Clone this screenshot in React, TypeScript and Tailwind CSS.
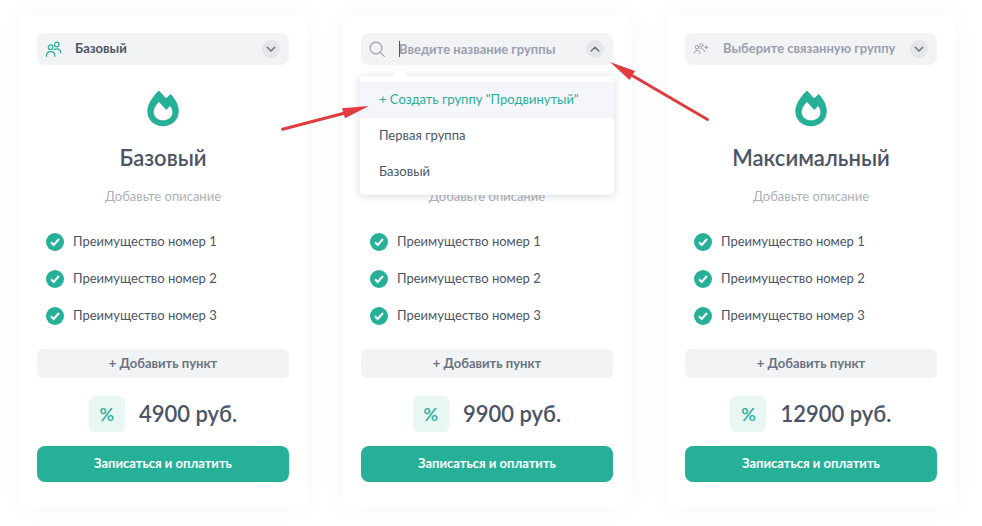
import type { ReactNode } from 'react';

const FEATURES = ['Преимущество номер 1', 'Преимущество номер 2', 'Преимущество номер 3'];

export default function App() {
  return (
    <main className="grid grid-cols-3 gap-9 bg-white pt-[15px] pr-[27px] pb-5 pl-[19px] font-['Lato','Noto_Sans',sans-serif] text-[13px] text-[#4b5566]">
      <Card title="Базовый" price="4900 руб.">
        <GroupSelect
          icon={<UsersIcon />}
          options={['Базовый', 'Первая группа']}
          className="text-[#4b5566]"
        />
      </Card>

      <Card price="9900 руб.">
        <GroupSearch />
        <GroupMenu />
        <Arrows />
      </Card>

      <Card title="Максимальный" price="12900 руб.">
        <GroupSelect
          icon={<UsersPlusIcon />}
          options={['Выберите связанную группу', 'Первая группа', 'Базовый']}
          className="text-[#9a9fb0]"
        />
      </Card>
    </main>
  );
}

function Card({ title, price, children }: { title?: string; price: string; children: ReactNode }) {
  return (
    <section className="relative flex flex-col rounded-lg bg-white px-[18px] pt-[18px] pb-[25px] shadow-[0_0_24px_rgba(0,0,0,0.04)]">
      {children}

      <FlameIcon />
      <h2 className="mt-[15px] min-h-8 text-center text-[22px] leading-8 font-semibold">{title}</h2>
      <p className="mt-3 text-center leading-5 text-[#adb0ba]">Добавьте описание</p>

      <ul className="mt-[27px] flex flex-col gap-[19px] pl-[9px]">
        {FEATURES.map((f) => (
          <li key={f} className="flex h-[18px] items-center gap-[9px]">
            <CheckIcon />
            <span>{f}</span>
          </li>
        ))}
      </ul>

      <button type="button" className="mt-6 h-[29px] rounded-md bg-[#f2f3f5] font-bold text-[#6a7282]">
        + Добавить пункт
      </button>

      <div className="mt-[18px] flex items-center justify-center gap-[14px]">
        <button
          type="button"
          aria-label="Скидка"
          className="size-9 rounded-md bg-[#e8f7f4] text-lg font-semibold text-[#27b098]"
        >
          %
        </button>
        <span className="text-[22px] leading-8 font-semibold">{price}</span>
      </div>

      <button type="button" className="mt-[14px] h-9 rounded-lg bg-[#27b098] font-bold text-white">
        Записаться и оплатить
      </button>
    </section>
  );
}

function GroupSelect({ icon, options, className }: { icon: ReactNode; options: string[]; className: string }) {
  return (
    <div className="relative">
      <select
        aria-label="Связанная группа"
        className={`block h-8 w-full appearance-none rounded-lg bg-[#f2f3f5] pr-9 pl-[38px] font-bold outline-none ${className}`}
      >
        {options.map((o) => (
          <option key={o}>{o}</option>
        ))}
      </select>
      <span className="pointer-events-none absolute inset-y-0 left-2 flex items-center">{icon}</span>
      <span className="pointer-events-none absolute inset-y-0 right-[9px] flex items-center">
        <Chevron />
      </span>
    </div>
  );
}

function GroupSearch() {
  return (
    <div className="relative">
      <input
        type="text"
        aria-label="Название группы"
        placeholder="Введите название группы"
        className="block h-8 w-full rounded-lg bg-[#f2f3f5] pr-9 pl-[38px] font-bold outline-none placeholder:text-[#9a9fb0]"
      />
      <span className="absolute inset-y-0 left-2 flex items-center">
        <SearchIcon />
      </span>
      <span className="absolute top-2 left-[38px] h-4 w-px bg-[#4b5566]" />
      <button type="button" aria-label="Свернуть" className="absolute inset-y-0 right-[9px] flex items-center">
        <Chevron up />
      </button>
    </div>
  );
}

function GroupMenu() {
  return (
    <div className="absolute inset-x-[17px] top-[61px] z-10 rounded-sm bg-white pt-[6px] pb-[5px] shadow-[0_1px_8px_rgba(40,50,80,0.18)]">
      <span className="absolute -top-[5px] left-[35px] size-[10px] rotate-45 bg-white" />
      <ul className="relative">
        <li>
          <button type="button" className="h-9 w-full bg-[#f5f6fb] px-[19px] text-left text-[#27b098]">
            + Создать группу "Продвинутый"
          </button>
        </li>
        <li>
          <button type="button" className="h-9 w-full px-[19px] text-left">
            Первая группа
          </button>
        </li>
        <li>
          <button type="button" className="h-9 w-full px-[19px] text-left">
            Базовый
          </button>
        </li>
      </ul>
    </div>
  );
}

function Arrows() {
  return (
    <>
      <svg className="absolute top-[85px] -left-[63px] z-20 h-8 w-[90px]" viewBox="0 0 90 32" fill="#e03c40">
        <path d="M2.500 29.200 65 13" stroke="#e03c40" strokeWidth="3" strokeLinecap="round" />
        <path d="M89 6 62 8.200 65 18.200Z" />
      </svg>
      <svg className="absolute top-[45px] -right-[80px] z-20 h-[62px] w-[104px]" viewBox="0 0 104 62" fill="#e03c40">
        <path d="M100.500 59.500 26 16" stroke="#e03c40" strokeWidth="3" strokeLinecap="round" />
        <path d="M3 2 28 11 22.500 20Z" />
      </svg>
    </>
  );
}

function FlameIcon() {
  return (
    <svg className="mt-[25px] h-[37px] w-8 self-center" viewBox="0 0 32 37" fill="#27b098">
      <path
        fillRule="evenodd"
        d="M12 .4 19 8.300 23.700 4C28.500 9 31.800 15.500 31.800 21.300 31.800 29.800 24.800 36.300 16 36.300S.3 29.800.3 21.300C.3 14.500 5.500 6.300 12 .4ZM12 12C9 14.800 6.700 18.800 6.700 22 6.700 27 10.800 30.300 16 30.300S25.400 27 25.400 22.400C25.400 20 24.300 17.500 23 16L19.300 20Z"
      />
    </svg>
  );
}

function CheckIcon() {
  return (
    <svg className="size-[18px] shrink-0" viewBox="0 0 18 18" fill="none">
      <circle cx="9" cy="9" r="9" fill="#27b098" />
      <path d="M5 9.300 7.700 12 13 6" stroke="#fff" strokeWidth="2" />
    </svg>
  );
}

function Chevron({ up = false }: { up?: boolean }) {
  return (
    <svg className="size-[18px]" viewBox="0 0 18 18" fill="none">
      <circle cx="9" cy="9" r="9" fill="#e4e6ea" />
      <path
        d={up ? 'M5.200 11 9 7.200 12.800 11' : 'M5.200 7.200 9 11 12.800 7.200'}
        stroke="#5f6878"
        strokeWidth="1.300"
        strokeLinecap="round"
        strokeLinejoin="round"
      />
    </svg>
  );
}

function SearchIcon() {
  return (
    <svg className="size-4" viewBox="0 0 16 16" fill="none" stroke="#9a9fb0" strokeWidth="1.200" strokeLinecap="round">
      <circle cx="7" cy="7" r="5.900" />
      <path d="m11.200 11.200 4.100 4.100" />
    </svg>
  );
}

function UsersIcon() {
  return (
    <svg className="h-[17px] w-[17px]" viewBox="0 0 17 17" fill="none" stroke="#27b098" strokeWidth="1.200" strokeLinecap="round">
      <circle cx="5.600" cy="6.200" r="2.300" />
      <circle cx="11.700" cy="3.500" r="2.300" />
      <path d="M1.500 15.300C1.500 12.300 3.200 10.700 5.700 10.700S9.900 12.300 9.900 15.300" />
      <path d="M9 8.700C9.700 8.100 10.700 7.800 11.700 7.800 14 7.800 15.600 9.300 15.600 12" />
    </svg>
  );
}

function UsersPlusIcon() {
  return (
    <svg className="h-4 w-[17px]" viewBox="0 0 17 16" fill="none" stroke="#9a9fb0" strokeWidth="1" strokeLinecap="round">
      <circle cx="4" cy="6.200" r="1.700" />
      <circle cx="8.300" cy="4.400" r="1.700" />
      <path d="M1.200 12.500C1.200 10.400 2.300 9.300 4.100 9.300S7 10.400 7 12.500" />
      <path d="M7 7.800C9.500 6.800 11.400 8.300 11.400 10.600" />
      <path d="M13.300 4.700v3.200M11.700 6.300h3.200" />
    </svg>
  );
}
